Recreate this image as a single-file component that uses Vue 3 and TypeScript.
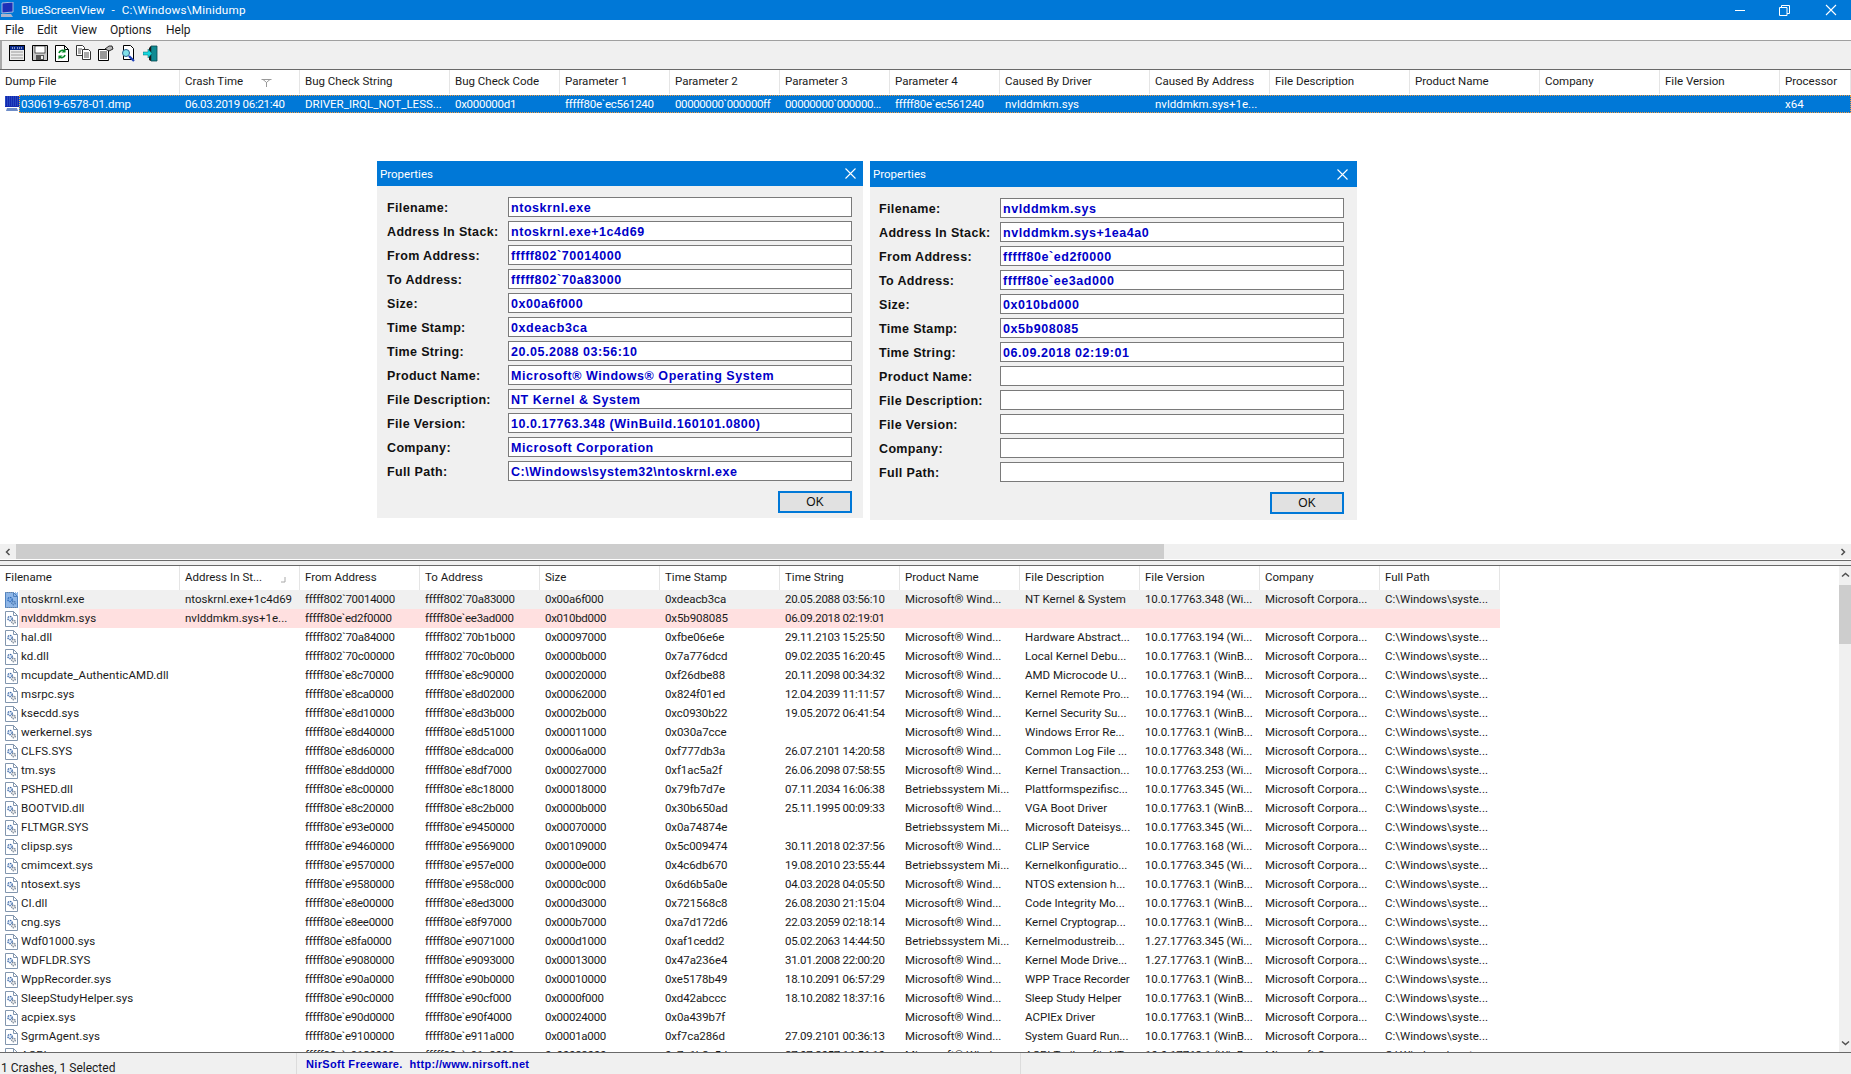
<script setup lang="ts">
const M = 'Microsoft® Wind...'
const B = 'Betriebssystem Mi...'
const V1 = '10.0.17763.1 (WinB...'
const C = 'Microsoft Corpora...'
const P = 'C:\\Windows\\syste...'
const a = "fffff80e`"

const appName = 'BlueScreenView  -  '
const appPath = 'C:\\Windows\\Minidump'
const statusLink = 'NirSoft Freeware.  http://www.nirsoft.net'

const topCols = [
  ['Dump File', 180], ['Crash Time', 120], ['Bug Check String', 150], ['Bug Check Code', 110],
  ['Parameter 1', 110], ['Parameter 2', 110], ['Parameter 3', 110], ['Parameter 4', 110],
  ['Caused By Driver', 150], ['Caused By Address', 120], ['File Description', 140],
  ['Product Name', 130], ['Company', 120], ['File Version', 120], ['Processor', 71]
] as [string, number][]

const topRow = [
  '030619-6578-01.dmp', '06.03.2019 06:21:40', 'DRIVER_IRQL_NOT_LESS...', '0x000000d1',
  "fffff80e`ec561240", "00000000`000000ff", "00000000`000000...", "fffff80e`ec561240",
  'nvlddmkm.sys', 'nvlddmkm.sys+1e...', '', '', '', '', 'x64'
]

const botCols = [
  'Filename', 'Address In St...', 'From Address', 'To Address', 'Size', 'Time Stamp',
  'Time String', 'Product Name', 'File Description', 'File Version', 'Company', 'Full Path'
]

const rows: string[][] = [
  ['ntoskrnl.exe', 'ntoskrnl.exe+1c4d69', "fffff802`70014000", "fffff802`70a83000", '0x00a6f000', '0xdeacb3ca', '20.05.2088 03:56:10', M, 'NT Kernel & System', '10.0.17763.348 (Wi...', C, P],
  ['nvlddmkm.sys', 'nvlddmkm.sys+1e...', a + 'ed2f0000', a + 'ee3ad000', '0x010bd000', '0x5b908085', '06.09.2018 02:19:01', '', '', '', '', ''],
  ['hal.dll', '', "fffff802`70a84000", "fffff802`70b1b000", '0x00097000', '0xfbe06e6e', '29.11.2103 15:25:50', M, 'Hardware Abstract...', '10.0.17763.194 (Wi...', C, P],
  ['kd.dll', '', "fffff802`70c00000", "fffff802`70c0b000", '0x0000b000', '0x7a776dcd', '09.02.2035 16:20:45', M, 'Local Kernel Debu...', V1, C, P],
  ['mcupdate_AuthenticAMD.dll', '', a + 'e8c70000', a + 'e8c90000', '0x00020000', '0xf26dbe88', '20.11.2098 00:34:32', M, 'AMD Microcode U...', V1, C, P],
  ['msrpc.sys', '', a + 'e8ca0000', a + 'e8d02000', '0x00062000', '0x824f01ed', '12.04.2039 11:11:57', M, 'Kernel Remote Pro...', '10.0.17763.194 (Wi...', C, P],
  ['ksecdd.sys', '', a + 'e8d10000', a + 'e8d3b000', '0x0002b000', '0xc0930b22', '19.05.2072 06:41:54', M, 'Kernel Security Su...', V1, C, P],
  ['werkernel.sys', '', a + 'e8d40000', a + 'e8d51000', '0x00011000', '0x030a7cce', '', M, 'Windows Error Re...', V1, C, P],
  ['CLFS.SYS', '', a + 'e8d60000', a + 'e8dca000', '0x0006a000', '0xf777db3a', '26.07.2101 14:20:58', M, 'Common Log File ...', '10.0.17763.348 (Wi...', C, P],
  ['tm.sys', '', a + 'e8dd0000', a + 'e8df7000', '0x00027000', '0xf1ac5a2f', '26.06.2098 07:58:55', M, 'Kernel Transaction...', '10.0.17763.253 (Wi...', C, P],
  ['PSHED.dll', '', a + 'e8c00000', a + 'e8c18000', '0x00018000', '0x79fb7d7e', '07.11.2034 16:06:38', B, 'Plattformspezifisc...', '10.0.17763.345 (Wi...', C, P],
  ['BOOTVID.dll', '', a + 'e8c20000', a + 'e8c2b000', '0x0000b000', '0x30b650ad', '25.11.1995 00:09:33', M, 'VGA Boot Driver', V1, C, P],
  ['FLTMGR.SYS', '', a + 'e93e0000', a + 'e9450000', '0x00070000', '0x0a74874e', '', B, 'Microsoft Dateisys...', '10.0.17763.345 (Wi...', C, P],
  ['clipsp.sys', '', a + 'e9460000', a + 'e9569000', '0x00109000', '0x5c009474', '30.11.2018 02:37:56', M, 'CLIP Service', '10.0.17763.168 (Wi...', C, P],
  ['cmimcext.sys', '', a + 'e9570000', a + 'e957e000', '0x0000e000', '0x4c6db670', '19.08.2010 23:55:44', B, 'Kernelkonfiguratio...', '10.0.17763.345 (Wi...', C, P],
  ['ntosext.sys', '', a + 'e9580000', a + 'e958c000', '0x0000c000', '0x6d6b5a0e', '04.03.2028 04:05:50', M, 'NTOS extension h...', V1, C, P],
  ['CI.dll', '', a + 'e8e00000', a + 'e8ed3000', '0x000d3000', '0x721568c8', '26.08.2030 21:15:04', M, 'Code Integrity Mo...', V1, C, P],
  ['cng.sys', '', a + 'e8ee0000', a + 'e8f97000', '0x000b7000', '0xa7d172d6', '22.03.2059 02:18:14', M, 'Kernel Cryptograp...', V1, C, P],
  ['Wdf01000.sys', '', a + 'e8fa0000', a + 'e9071000', '0x000d1000', '0xaf1cedd2', '05.02.2063 14:44:50', B, 'Kernelmodustreib...', '1.27.17763.345 (Wi...', C, P],
  ['WDFLDR.SYS', '', a + 'e9080000', a + 'e9093000', '0x00013000', '0x47a236e4', '31.01.2008 22:00:20', M, 'Kernel Mode Drive...', '1.27.17763.1 (WinB...', C, P],
  ['WppRecorder.sys', '', a + 'e90a0000', a + 'e90b0000', '0x00010000', '0xe5178b49', '18.10.2091 06:57:29', M, 'WPP Trace Recorder', V1, C, P],
  ['SleepStudyHelper.sys', '', a + 'e90c0000', a + 'e90cf000', '0x0000f000', '0xd42abccc', '18.10.2082 18:37:16', M, 'Sleep Study Helper', V1, C, P],
  ['acpiex.sys', '', a + 'e90d0000', a + 'e90f4000', '0x00024000', '0x0a439b7f', '', M, 'ACPIEx Driver', V1, C, P],
  ['SgrmAgent.sys', '', a + 'e9100000', a + 'e911a000', '0x0001a000', '0xf7ca286d', '27.09.2101 00:36:13', M, 'System Guard Run...', V1, C, P],
  ['ACPI.sys', '', a + 'e9120000', a + 'e91a8000', '0x00088000', '0x7a1b3c5d', '27.07.2057 16:56:10', M, 'ACPI-Treiber für NT', V1, C, P]
]

const labels = ['Filename:', 'Address In Stack:', 'From Address:', 'To Address:', 'Size:', 'Time Stamp:', 'Time String:', 'Product Name:', 'File Description:', 'File Version:', 'Company:', 'Full Path:']

const dialogs = [
  {
    id: 'one',
    values: ['ntoskrnl.exe', 'ntoskrnl.exe+1c4d69', "fffff802`70014000", "fffff802`70a83000", '0x00a6f000', '0xdeacb3ca', '20.05.2088 03:56:10', 'Microsoft® Windows® Operating System', 'NT Kernel & System', '10.0.17763.348 (WinBuild.160101.0800)', 'Microsoft Corporation', 'C:\\Windows\\system32\\ntoskrnl.exe']
  },
  {
    id: 'two',
    values: ['nvlddmkm.sys', 'nvlddmkm.sys+1ea4a0', a + 'ed2f0000', a + 'ee3ad000', '0x010bd000', '0x5b908085', '06.09.2018 02:19:01', '', '', '', '', '']
  }
]
</script>

<template>
  <div class="app">
    <header class="titlebar">
      <svg class="appicon" width="16" height="16" viewBox="0 0 16 16">
        <path d="M2 1l11-1v10L2 11z" fill="#1c2fb8" stroke="#c8d0e8" stroke-width=".8" />
        <path d="M1 12h10l2 3H1z" fill="#aab4cc" />
      </svg>
      <span class="apptitle">{{ appName }}</span><span class="apppath">{{ appPath }}</span>
      <div class="winctl">
        <svg width="11" height="11" viewBox="0 0 11 11" class="c-min"><path d="M0 5.500h10" stroke="#fff" /></svg>
        <svg width="11" height="11" viewBox="0 0 11 11" class="c-res"><path d="M.5 2.500h7.500v8H.5zM2.500 2.500V.5h8v8H8" fill="none" stroke="#fff" /></svg>
        <svg width="12" height="12" viewBox="0 0 12 12" class="c-cls"><path d="M1 1l10 10M11 1L1 11" stroke="#fff" stroke-width="1.100" /></svg>
      </div>
    </header>

    <nav class="menubar">
      <span>File</span><span>Edit</span><span>View</span><span>Options</span><span>Help</span>
    </nav>

    <div class="toolbar">
      <svg width="16" height="16" viewBox="0 0 16 16">
        <rect x=".5" y=".5" width="15" height="15" fill="#ececec" stroke="#000" />
        <rect x="1" y="1" width="14" height="4" fill="#0a2a8c" />
        <path d="M3 3h3M8 3h5" stroke="#fff" stroke-dasharray="1 1" />
        <path d="M2 7h12M2 10h12M2 13h12" stroke="#9a9a9a" />
      </svg>
      <svg width="16" height="16" viewBox="0 0 16 16">
        <path d="M.5.5h15v15H.5z" fill="#c8c8c8" stroke="#000" />
        <rect x="3" y="1" width="10" height="7" fill="#fff" stroke="#000" stroke-width=".6" />
        <rect x="4" y="10" width="8" height="5" fill="#555" />
        <rect x="9" y="11" width="2" height="3" fill="#eee" />
      </svg>
      <svg width="14" height="17" viewBox="0 0 14 17">
        <path d="M.5.5h9l4 4v12H.5z" fill="#fff" stroke="#000" />
        <path d="M9.500.5v4h4" fill="none" stroke="#000" />
        <path d="M4 8a3.500 3.500 0 0 1 6-1.500M10 10a3.500 3.500 0 0 1-6 1.500" fill="none" stroke="#0a8a2a" stroke-width="1.600" />
        <path d="M10.500 3.500v4h-4zM3.500 14.500v-4h4z" fill="#0a8a2a" />
      </svg>
      <svg width="15" height="15" viewBox="0 0 15 15">
        <path d="M.5.5h6l2 2v8H.5z" fill="#fff" stroke="#333" />
        <path d="M6.500 4.500h6l2 2v8h-8z" fill="#fff" stroke="#333" />
        <path d="M2 4h4M2 6h3M2 8h3M8 8h5M8 10h5M8 12h5" stroke="#555" />
      </svg>
      <svg width="16" height="16" viewBox="0 0 16 16">
        <path d="M.5 4.500h10v11H.5z" fill="#fff" stroke="#000" />
        <path d="M2 7h7M2 9h7M2 11h7M2 13h7" stroke="#333" />
        <path d="M7 4l4-3 3 0 1 3-4 2z" fill="#b8b8b8" stroke="#000" stroke-width=".8" />
      </svg>
      <svg width="15" height="17" viewBox="0 0 15 17">
        <path d="M2.500.5h7l3 3v11h-10z" fill="#fff" stroke="#000" />
        <circle cx="5" cy="8" r="3.500" fill="#7fe0e8" stroke="#2a5f8c" />
        <path d="M8 11l5 5" stroke="#1c3fb8" stroke-width="2.200" />
      </svg>
      <svg width="15" height="17" viewBox="0 0 15 17">
        <path d="M8 1h6v15H8z" fill="#0f8a92" stroke="#064a50" stroke-width=".8" />
        <path d="M8 1l-2 2v12l2 1" fill="#1a1a1a" />
        <path d="M0 7h5V4l4 4.500L5 13v-3H0z" fill="#17d7e0" stroke="#066" stroke-width=".5" />
      </svg>
    </div>

    <section class="upper">
      <div class="upper-list">
        <div class="hdr">
          <div v-for="(c, i) in topCols" :key="c[0]" class="th" :style="{ width: c[1] + 'px' }">
            {{ c[0] }}
            <svg v-if="i === 1" class="sort-top" width="11" height="8" viewBox="0 0 11 8"><path d="M.5.500h10M2 .5l3 2.500M9 .5L6 3M5.500 3v5" stroke="#9a9a9a" fill="none" /></svg>
          </div>
        </div>
        <div class="sel-row">
          <svg class="sel-icon" width="16" height="16" viewBox="0 0 16 16">
            <rect x="1" y="0" width="14" height="11" fill="#1428b0" />
            <path d="M1 1h14M1 3h14M1 5h14M1 7h14M1 9h14" stroke="#3a6ad0" stroke-dasharray="1 1" />
            <path d="M3 12h10l1 3H2z" fill="#6d8cc8" />
          </svg>
          <div class="sel-body">
            <div v-for="(t, i) in topRow" :key="i" class="td-top" :class="{ first: i === 0 }" :style="{ width: (i === 0 ? topCols[i][1] - 19 : topCols[i][1]) + 'px' }">{{ t }}</div>
          </div>
        </div>
      </div>
      <div class="hscroll">
        <svg class="arr" width="8" height="8" viewBox="0 0 8 8"><path d="M5.500 1L2.500 4l3 3" fill="none" stroke="#505050" stroke-width="1.500" /></svg>
        <div class="hthumb"></div>
        <div class="hrest"></div>
        <svg class="arr" width="8" height="8" viewBox="0 0 8 8"><path d="M2.500 1l3 3-3 3" fill="none" stroke="#505050" stroke-width="1.500" /></svg>
      </div>
    </section>

    <div class="split"></div>

    <section class="lower">
      <div class="lower-list">
        <div class="hdr hdr-low">
          <div v-for="(c, i) in botCols" :key="c" class="th" :style="{ width: (i === 0 ? 180 : 120) + 'px' }">
            {{ c }}
            <svg v-if="i === 1" class="sort-low" width="6" height="6" viewBox="0 0 6 6"><path d="M5 0v5H1" fill="none" stroke="#a8a8a8" /></svg>
          </div>
        </div>
        <div v-for="(r, ri) in rows" :key="ri" class="row">
          <svg class="file-icon" width="15" height="16" viewBox="0 0 15 16">
            <path d="M1.500.5h8l4 4v11h-12z" fill="#fff" stroke="#8296ae" />
            <path d="M9.500.5v4h4" fill="none" stroke="#8296ae" />
            <circle cx="6" cy="7.500" r="2.200" fill="#dbe6f4" stroke="#3f6aa8" stroke-width="1.300" stroke-dasharray="1.500 .8" />
            <circle cx="9.500" cy="11" r="1.800" fill="#e6e6e6" stroke="#6f7f92" stroke-width="1.200" stroke-dasharray="1.300 .8" />
            <path v-if="ri === 0" d="M1 1h13M1 3h13M1 5h13M1 7h13M1 9h13M1 11h13M1 13h13M1 15h13M2 2h12M2 4h12M2 6h12M2 8h12M2 10h12M2 12h12M2 14h12" stroke="#1f6fd0" stroke-dasharray="1 1" />
          </svg>
          <div class="row-body" :class="{ grey: ri === 0, pink: ri === 1 }">
            <div v-for="(t, ci) in r" :key="ci" class="td" :class="{ first: ci === 0 }" :style="{ width: (ci === 0 ? 161 : 120) + 'px' }">{{ t }}</div>
          </div>
        </div>
      </div>
      <div class="vscroll">
        <svg class="varr" width="9" height="8" viewBox="0 0 9 8"><path d="M1 5.500l3.500-3 3.500 3" fill="none" stroke="#505050" stroke-width="1.500" /></svg>
        <div class="vthumb"></div>
        <div class="vrest"></div>
        <svg class="varr" width="9" height="8" viewBox="0 0 9 8"><path d="M1 2.500l3.500 3 3.500-3" fill="none" stroke="#505050" stroke-width="1.500" /></svg>
      </div>
    </section>

    <footer class="status">
      <div class="st st1">1 Crashes, 1 Selected</div>
      <div class="st st2">{{ statusLink }}</div>
      <div class="st st3"></div>
    </footer>

    <div v-for="d in dialogs" :key="d.id" class="dialog" :class="d.id">
      <div class="dlg-title">
        <span>Properties</span>
        <svg width="11" height="11" viewBox="0 0 11 11"><path d="M.5.5l10 10M10.500.5l-10 10" stroke="#fff" stroke-width="1.100" /></svg>
      </div>
      <div class="dlg-body">
        <div v-for="(l, i) in labels" :key="l" class="field-row">
          <label class="lbl">{{ l }}</label>
          <div class="field">{{ d.values[i] }}</div>
        </div>
        <div class="btn-row"><div class="ok">OK</div></div>
      </div>
    </div>
  </div>
</template>

<style scoped>
.app {
  position: relative;
  width: 1851px;
  height: 1074px;
  overflow: hidden;
  display: flex;
  flex-direction: column;
  background: #fff;
  font-family: Roboto, "Liberation Sans", sans-serif;
  font-size: 11.5px;
  color: #1a1a1a;
}
.titlebar {
  height: 20px;
  background: #0078d7;
  color: #fff;
  display: flex;
  align-items: center;
  flex: none;
  font-size: 11.7px;
}
.appicon { margin: 0 4px 0 0; flex: none; }
.apptitle { margin-left: 1px; white-space: pre; word-spacing: .5px; }
.apppath { letter-spacing: .22px; white-space: pre; }
.winctl { margin-left: auto; display: flex; align-items: center; }
.c-min { margin-right: 33px; }
.c-res { margin-right: 35px; }
.c-cls { margin-right: 14px; }
.menubar {
  height: 20px;
  flex: none;
  display: flex;
  align-items: center;
  background: #fff;
  font-size: 12px;
  border-bottom: 1px solid #a0a0a0;
  padding-left: 5px;
}
.menubar span:nth-child(1) { width: 32px; }
.menubar span:nth-child(2) { width: 34px; }
.menubar span:nth-child(3) { width: 39px; }
.menubar span:nth-child(4) { width: 56px; }
.toolbar {
  height: 28px;
  flex: none;
  box-sizing: border-box;
  background: #f0f0f0;
  border-left: 2px solid #a8a8a8;
  display: flex;
  align-items: flex-start;
  padding: 4px 0 0 7px;
  gap: 7px;
}
.upper {
  flex: none;
  height: 489px;
  border-top: 1px solid #696969;
  display: flex;
  flex-direction: column;
}
.upper-list { flex: 1; overflow: hidden; }
.hdr {
  display: flex;
  height: 24px;
  background: #fff;
  margin-bottom: 1px;
}
.th {
  flex: none;
  box-sizing: border-box;
  padding-left: 5px;
  line-height: 23px;
  border-right: 1px solid #e5e5e5;
  white-space: nowrap;
  overflow: hidden;
  position: relative;
}
.sort-top { position: absolute; left: 81px; top: 9px; }
.sort-low { position: absolute; left: 100px; top: 11px; }
.sel-row { display: flex; height: 18px; align-items: center; }
.sel-icon { flex: none; margin-left: 4px; margin-right: -1px; }
.sel-body {
  flex: 1;
  display: flex;
  height: 18px;
  background: #0078d7;
  color: #fff;
  outline: 1px dotted #f29a3f;
  outline-offset: -1px;
  line-height: 18px;
}
.td-top {
  flex: none;
  box-sizing: border-box;
  padding-left: 5px;
  white-space: nowrap;
  overflow: hidden;
}
.td-top.first { padding-left: 2px; }
.td-top:nth-child(2), .td-top:nth-child(4), .td-top:nth-child(5), .td-top:nth-child(8) { letter-spacing: -.28px; }
.td-top:nth-child(6), .td-top:nth-child(7) { letter-spacing: -.4px; }
.hscroll {
  height: 15px;
  flex: none;
  background: #f0f0f0;
  display: flex;
  align-items: center;
}
.arr { flex: none; margin: 0 4px; }
.hthumb { width: 1148px; height: 15px; background: #cdcdcd; margin-left: 0; }
.hrest { flex: 1; }
.split {
  height: 6px;
  flex: none;
  box-sizing: border-box;
  margin-top: 1px;
  border-top: 1px solid #696969;
  border-bottom: 1px solid #696969;
  background: #f0f0f0;
}
.lower { flex: 1; min-height: 0; display: flex; overflow: hidden; }
.lower-list { flex: 1; overflow: hidden; }
.hdr-low { margin-bottom: 0; }
.row { display: flex; height: 19px; align-items: center; }
.file-icon { flex: none; margin-left: 4px; margin-right: 0; }
.row-body {
  display: flex;
  height: 19px;
  line-height: 19px;
  width: 1481px;
  flex: none;
}
.grey { background: #f0f0f0; }
.pink { background: #ffe0e0; }
.td {
  flex: none;
  box-sizing: border-box;
  padding-left: 5px;
  white-space: nowrap;
  overflow: hidden;
}
.td.first { padding-left: 2px; letter-spacing: .1px; }
.td:nth-child(3), .td:nth-child(4), .td:nth-child(5), .td:nth-child(7) { letter-spacing: -.28px; }
.td:nth-child(6), .td:nth-child(10) { letter-spacing: -.1px; }
.vscroll {
  width: 12px;
  flex: none;
  background: #f0f0f0;
  display: flex;
  flex-direction: column;
  align-items: center;
}
.varr { flex: none; margin: 5px 0; }
.vthumb { width: 12px; height: 59px; background: #cdcdcd; margin-top: 1px; }
.vrest { flex: 1; }
.status {
  height: 22px;
  flex: none;
  box-sizing: border-box;
  border-top: 1px solid #696969;
  background: #f0f0f0;
  display: flex;
  font-size: 12px;
}
.st { border-right: 1px solid #dcdcdc; line-height: 30px; white-space: nowrap; box-sizing: border-box; }
.st1 { width: 297px; padding-left: 1px; }
.st2 {
  width: 724px;
  padding-left: 9px;
  line-height: 22px;
  white-space: pre;
  font-family: "Liberation Sans", sans-serif;
  font-weight: 700;
  font-size: 11px;
  color: #0000c8;
  letter-spacing: .33px;
}
.st3 { flex: 1; border-right: 0; }
.dialog {
  position: absolute;
  background: #f0f0f0;
  display: flex;
  flex-direction: column;
}
.dialog.one { left: 377px; top: 161px; width: 486px; height: 357px; }
.dialog.two { left: 870px; top: 161px; width: 487px; height: 359px; }
.dlg-title {
  height: 25px;
  flex: none;
  background: #0078d7;
  color: #fff;
  font-size: 11.5px;
  display: flex;
  align-items: center;
  justify-content: space-between;
  padding: 0 7px 0 3px;
}
.two .dlg-title { height: 26px; padding-right: 9px; }
.dlg-body { padding: 11px 11px 0 10px; }
.two .dlg-body { padding: 11px 13px 0 9px; }
.field-row { display: flex; align-items: center; height: 20px; margin-bottom: 4px; }
.lbl {
  width: 121px;
  flex: none;
  padding-top: 1px;
  font-family: "Liberation Sans", sans-serif;
  font-weight: 700;
  font-size: 12.5px;
  letter-spacing: .35px;
  color: #111;
  white-space: nowrap;
}
.field {
  flex: 1;
  height: 20px;
  box-sizing: border-box;
  border: 1px solid #7a7a7a;
  background: #fff;
  padding-left: 2px;
  line-height: 20px;
  font-family: "Liberation Sans", sans-serif;
  font-weight: 700;
  font-size: 12.5px;
  letter-spacing: .55px;
  color: #0000c8;
  white-space: nowrap;
  overflow: hidden;
}
.btn-row { display: flex; justify-content: flex-end; margin-top: 10px; }
.ok {
  width: 74px;
  height: 22px;
  box-sizing: border-box;
  border: 2px solid #0078d7;
  background: #e1e1e1;
  text-align: center;
  line-height: 18px;
  font-family: "Liberation Sans", sans-serif;
  font-size: 12px;
  color: #111;
}
</style>
